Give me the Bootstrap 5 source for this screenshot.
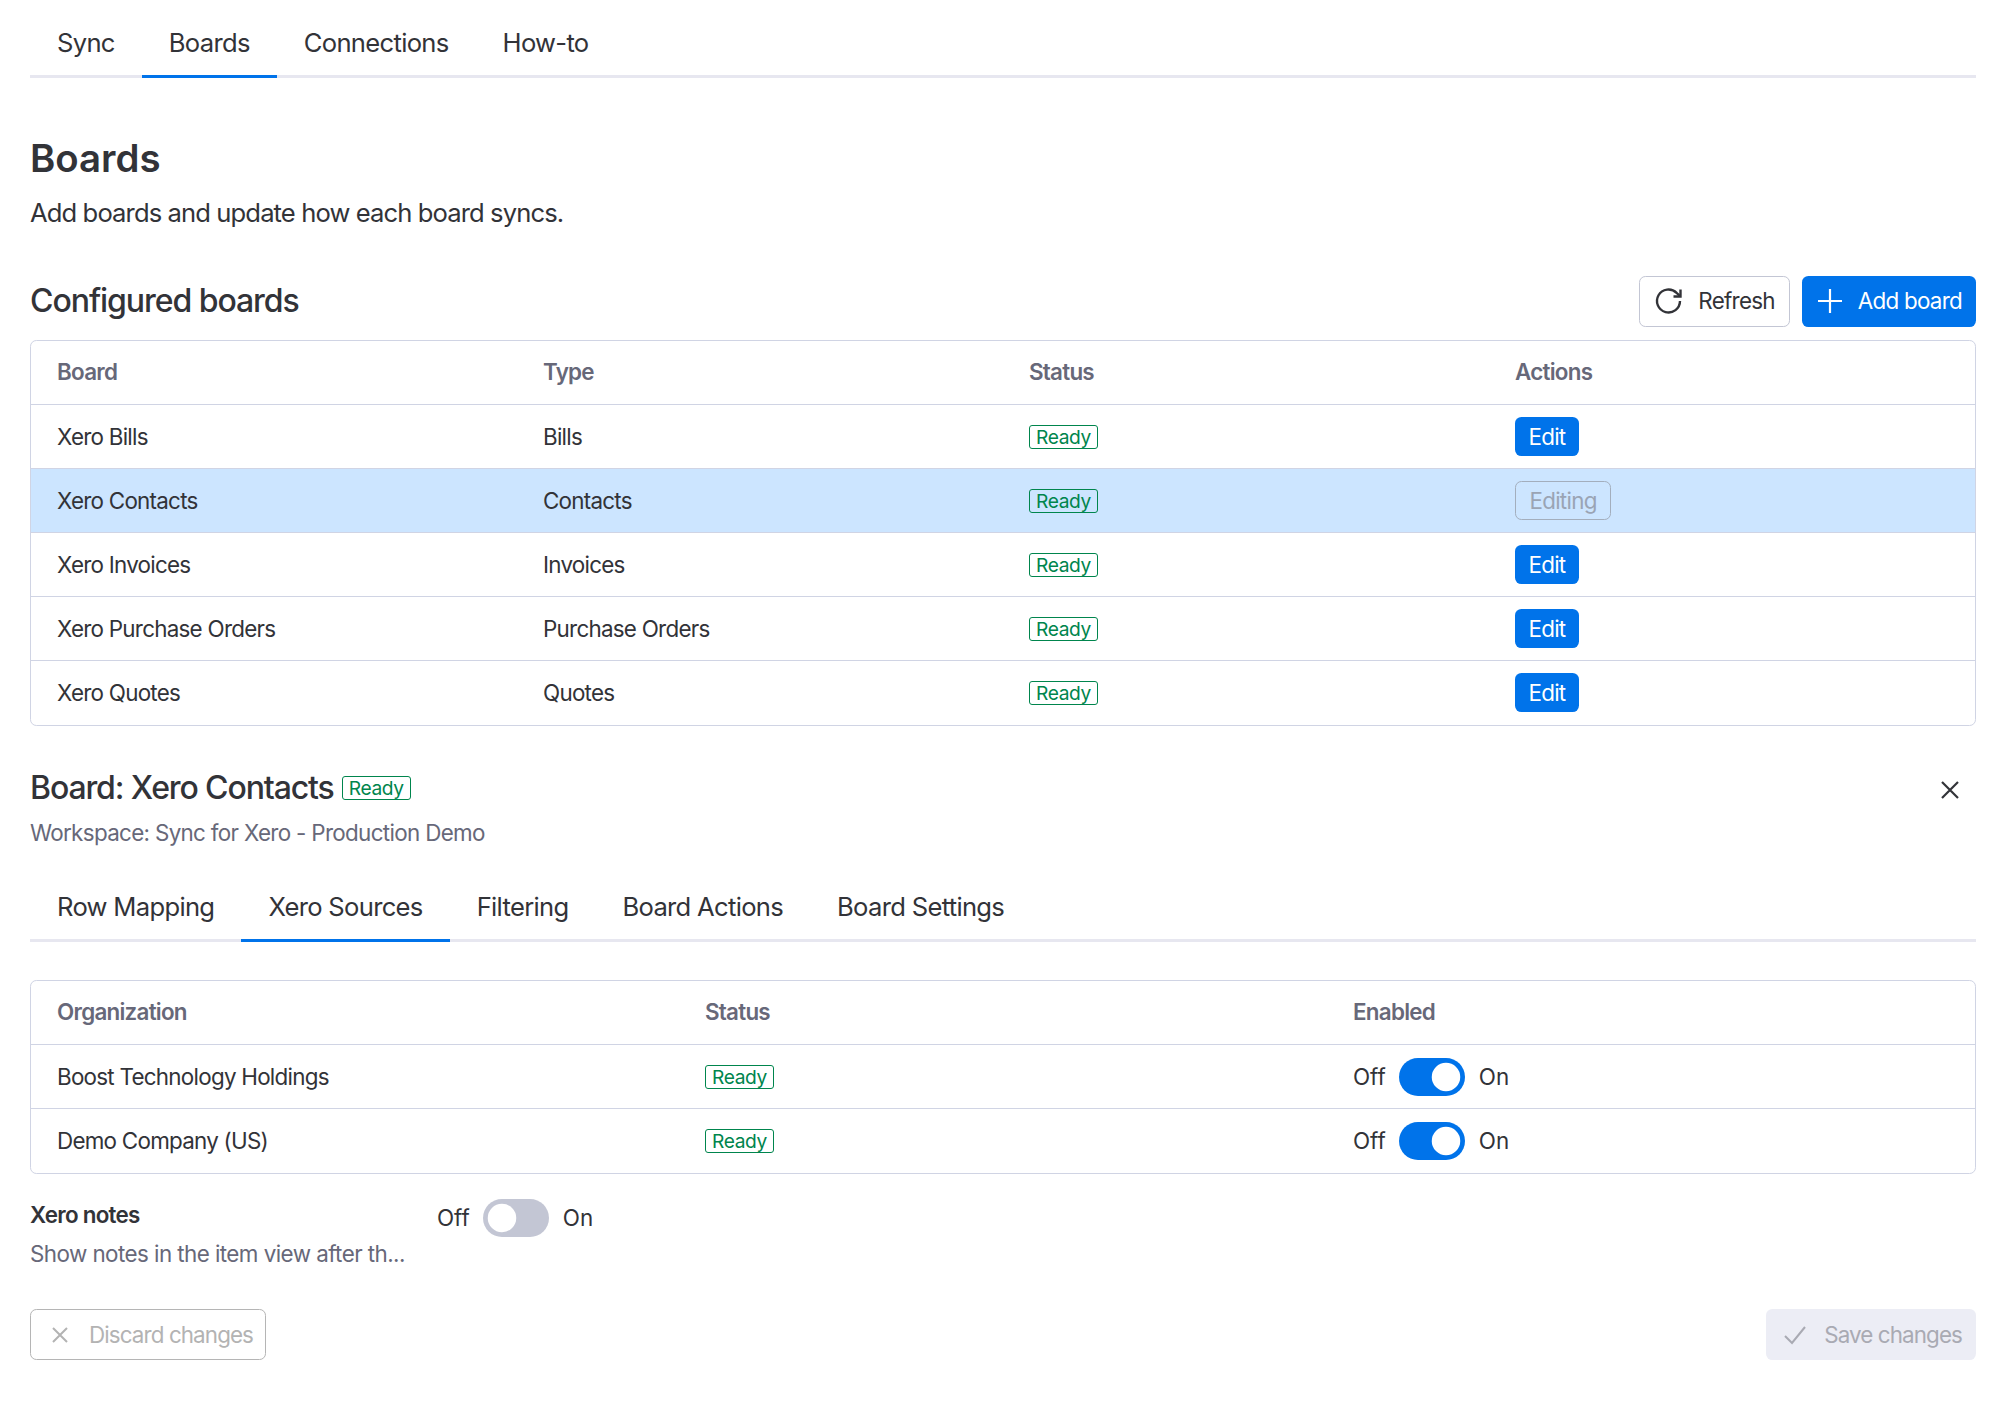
<!DOCTYPE html>
<html lang="en">
<head>
<meta charset="UTF-8">
<title>Boards</title>
<link rel="stylesheet" href="https://cdn.jsdelivr.net/npm/bootstrap@5.3.3/dist/css/bootstrap.min.css">
<style>
body { font-family: "Inter", "Liberation Sans", sans-serif; color: #323338; font-size: 22.4px; letter-spacing: -0.033em; background: #fff; }
.page-wrap { padding: 0 34px 0 30px; }
.tab-bar { border-bottom: 3px solid #e7e7f0; height: 78px; gap: 0; flex-wrap: nowrap; }
.tab-bar .nav-link { color: #323338; font-size: 25.6px; padding: 0 27px; height: 78px; line-height: 85px; margin-bottom: 0; border-bottom: 3px solid transparent; letter-spacing: -0.027em; }
.tab-bar .nav-link.active { border-bottom-color: #0073ea; }
.page-title { font-size: 38.4px; font-weight: 600; margin: 55px 0 0; line-height: 50px; letter-spacing: 0; }
.page-sub { font-size: 25.6px; margin: 10px 0 0; line-height: 40px; letter-spacing: -0.035em; }
.sect-title { font-size: 32px; font-weight: 500; margin: 0; letter-spacing: -0.033em; }
.sect-head { margin-top: 42.500px; height: 51px; margin-bottom: 13px; }
.head-btns { display: flex; gap: 12px; }
.btn-monday { font-size: 22.4px; height: 51px; border-radius: 6.4px; padding: 0 14px; letter-spacing: inherit; display: inline-flex; align-items: center; gap: 14px; }
.btn-line { border: 1.5px solid #c3c6d4; color: #323338; background: #fff; }
.btn-fill { background: #0073ea; color: #fff; border: 0; padding-left: 15px; gap: 15px; }
.tbl-box { border: 1.5px solid #d0d4e4; border-radius: 6.4px; overflow: hidden; }
.tbl-box .table { margin: 0; table-layout: fixed; color: #323338; }
.tbl-box .table > * > * > * { height: 64px; padding: 0 26px; vertical-align: middle; border-bottom: 1.5px solid #d0d4e4; background: transparent; color: inherit; box-shadow: none; }
.tbl-box tr:last-child td { border-bottom: 0; }
.tbl-box th { font-weight: 600; color: #676879 !important; }
.row-picked td { background: #cce5ff !important; }
.ready-tag { display: block; width: fit-content; border: 1.5px solid #00854d; color: #00854d; background: transparent; border-radius: 3px; font-size: 19.2px; font-weight: 400; line-height: 22px; padding: 0 6px; letter-spacing: -0.02em; }
.btn-edit { background: #0073ea; color: #fff; font-size: 22.4px; height: 39px; padding: 0 13.500px; border: 0; border-radius: 6.4px; line-height: 39px; letter-spacing: inherit; vertical-align: middle; }
.btn-editing { background: transparent; color: #9aa4b4; border: 1.5px solid #a3aebd; font-size: 22.4px; height: 39px; padding: 0 13.500px; border-radius: 6.4px; line-height: 34px; letter-spacing: inherit; vertical-align: middle; }
.detail-head { margin-top: 40px; }
.detail-title { font-size: 32px; font-weight: 500; margin: 0; line-height: 44px; letter-spacing: -0.035em; }
.close-x { border: 0; background: none; padding: 0; line-height: 0; margin-right: 17px; margin-top: 4px; }
.muted-line { color: #676879; }
.workspace-line { margin: 6px 0 0; line-height: 34px; letter-spacing: -0.03em; }
.sub-tabs { margin-top: 26px; margin-bottom: 38px; height: 66px; }
.sub-tabs .nav-link { height: 66px; line-height: 62px; }
.switch-line { display: flex; align-items: center; gap: 13.500px; letter-spacing: 0; }
.form-switch.sw-box { padding: 0; margin: 0; min-height: 0; line-height: 0; }
.form-switch.sw-box .form-check-input { width: 66px; height: 38px; margin: 0; float: none; border: 0; background-color: #c3c6d4; background-image: url("data:image/svg+xml,%3csvg xmlns='http://www.w3.org/2000/svg' viewBox='-4 -4 8 8'%3e%3ccircle r='3' fill='%23fff'/%3e%3c/svg%3e"); box-shadow: none; }
.form-switch.sw-box .form-check-input:checked { background-color: #0073ea; }
.notes-row { margin-top: 25px; }
.notes-text { width: 407px; }
.notes-name { font-weight: 600; line-height: 32px; }
.notes-desc { line-height: 32px; margin-top: 7px; letter-spacing: -0.025em; }
.foot-row { margin-top: 39.500px; }
.btn-monday:disabled { opacity: 1; letter-spacing: -0.04em; }
.btn-monday.btn-discard:disabled { border: 1.5px solid #b5b5b5; color: #b3b3b3; background: #fff; padding: 0 12px 0 20px; gap: 20px; }
.btn-monday.btn-save:disabled { background: #ecedf5; color: #a9aab3; border: 0; padding-left: 17px; gap: 17px; }
</style>
</head>
<body>
<div class="page-wrap">

    <!-- top tabs -->
    <ul class="nav tab-bar">
        <li class="nav-item"><a class="nav-link" href="#">Sync</a></li>
        <li class="nav-item"><a class="nav-link active" href="#">Boards</a></li>
        <li class="nav-item"><a class="nav-link" href="#">Connections</a></li>
        <li class="nav-item"><a class="nav-link" href="#">How-to</a></li>
    </ul>

    <h1 class="page-title">Boards</h1>
    <p class="page-sub">Add boards and update how each board syncs.</p>

    <!-- configured boards -->
    <div class="d-flex justify-content-between align-items-center sect-head">
        <h2 class="sect-title">Configured boards</h2>
        <div class="head-btns">
            <button class="btn btn-monday btn-line">
                <svg width="30" height="30" viewBox="0 0 30 30" fill="none" stroke="#323338" stroke-width="2.4"><path d="M26 15a11.500 11.500 0 1 1-3.400-8.200L26 10"/><path d="M26.500 3.500V10.500H19.500"/></svg>
                Refresh
            </button>
            <button class="btn btn-monday btn-fill">
                <svg width="26" height="26" viewBox="0 0 26 26" fill="none" stroke="#fff" stroke-width="2.2"><path d="M13 1v24M1 13h24"/></svg>
                Add board
            </button>
        </div>
    </div>

    <div class="tbl-box">
        <table class="table">
            <thead>
                <tr><th>Board</th><th>Type</th><th>Status</th><th>Actions</th></tr>
            </thead>
            <tbody>
                <tr><td>Xero Bills</td><td>Bills</td><td><span class="badge ready-tag">Ready</span></td><td><button class="btn btn-edit">Edit</button></td></tr>
                <tr class="row-picked"><td>Xero Contacts</td><td>Contacts</td><td><span class="badge ready-tag">Ready</span></td><td><button class="btn btn-editing">Editing</button></td></tr>
                <tr><td>Xero Invoices</td><td>Invoices</td><td><span class="badge ready-tag">Ready</span></td><td><button class="btn btn-edit">Edit</button></td></tr>
                <tr><td>Xero Purchase Orders</td><td>Purchase Orders</td><td><span class="badge ready-tag">Ready</span></td><td><button class="btn btn-edit">Edit</button></td></tr>
                <tr><td>Xero Quotes</td><td>Quotes</td><td><span class="badge ready-tag">Ready</span></td><td><button class="btn btn-edit">Edit</button></td></tr>
            </tbody>
        </table>
    </div>

    <!-- board detail -->
    <div class="d-flex justify-content-between align-items-center detail-head">
        <div class="d-flex align-items-center gap-2">
            <h2 class="detail-title">Board: Xero Contacts</h2>
            <span class="badge ready-tag">Ready</span>
        </div>
        <button class="close-x" aria-label="Close">
            <svg width="18" height="18" viewBox="0 0 18 18" fill="none" stroke="#323338" stroke-width="2.2"><path d="M1 1l16 16M17 1L1 17"/></svg>
        </button>
    </div>
    <p class="muted-line workspace-line">Workspace: Sync for Xero - Production Demo</p>

    <ul class="nav tab-bar sub-tabs">
        <li class="nav-item"><a class="nav-link" href="#">Row Mapping</a></li>
        <li class="nav-item"><a class="nav-link active" href="#">Xero Sources</a></li>
        <li class="nav-item"><a class="nav-link" href="#">Filtering</a></li>
        <li class="nav-item"><a class="nav-link" href="#">Board Actions</a></li>
        <li class="nav-item"><a class="nav-link" href="#">Board Settings</a></li>
    </ul>

    <div class="tbl-box">
        <table class="table">
            <thead>
                <tr><th>Organization</th><th>Status</th><th>Enabled</th></tr>
            </thead>
            <tbody>
                <tr>
                    <td>Boost Technology Holdings</td>
                    <td><span class="badge ready-tag">Ready</span></td>
                    <td><div class="switch-line"><span>Off</span><div class="form-check form-switch sw-box"><input class="form-check-input" type="checkbox" role="switch" checked></div><span>On</span></div></td>
                </tr>
                <tr>
                    <td>Demo Company (US)</td>
                    <td><span class="badge ready-tag">Ready</span></td>
                    <td><div class="switch-line"><span>Off</span><div class="form-check form-switch sw-box"><input class="form-check-input" type="checkbox" role="switch" checked></div><span>On</span></div></td>
                </tr>
            </tbody>
        </table>
    </div>

    <div class="d-flex align-items-start notes-row">
        <div class="notes-text">
            <div class="notes-name">Xero notes</div>
            <div class="muted-line notes-desc">Show notes in the item view after th...</div>
        </div>
        <div class="switch-line"><span>Off</span><div class="form-check form-switch sw-box"><input class="form-check-input" type="checkbox" role="switch"></div><span>On</span></div>
    </div>

    <div class="d-flex justify-content-between foot-row">
        <button class="btn btn-monday btn-discard" disabled>
            <svg width="18" height="18" viewBox="0 0 18 18" fill="none" stroke="#b3b3b3" stroke-width="2"><path d="M2 2l14 14M16 2L2 16"/></svg>
            Discard changes
        </button>
        <button class="btn btn-monday btn-save" disabled>
            <svg width="24" height="20" viewBox="0 0 24 20" fill="none" stroke="#a9aab3" stroke-width="2"><path d="M2 11l7 7L22 2"/></svg>
            Save changes
        </button>
    </div>

</div>
<script src="https://cdn.jsdelivr.net/npm/bootstrap@5.3.3/dist/js/bootstrap.bundle.min.js"></script>
</body>
</html>
